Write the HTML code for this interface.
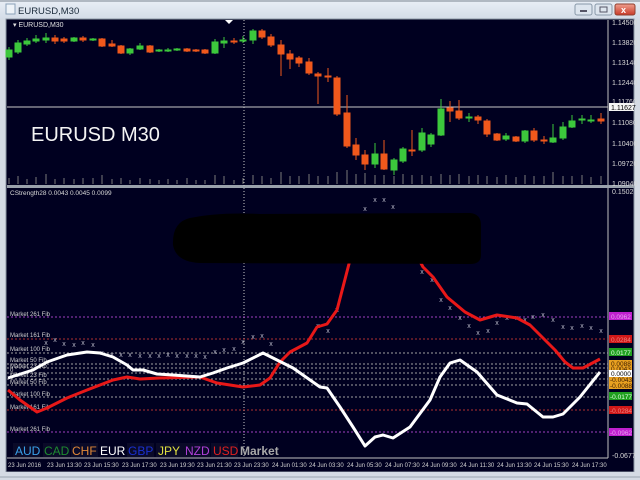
<!DOCTYPE html>
<html><head><meta charset="utf-8"><style>
html,body{margin:0;padding:0;width:640px;height:480px;overflow:hidden;background:#d6dde6;}
svg{display:block;font-family:"Liberation Sans",sans-serif;}
</style></head><body>
<svg width="640" height="480" viewBox="0 0 640 480" xmlns="http://www.w3.org/2000/svg">
<defs>
<linearGradient id="tb" x1="0" y1="0" x2="0" y2="1"><stop offset="0" stop-color="#e9eff6"/><stop offset="1" stop-color="#d3dce7"/></linearGradient>
<linearGradient id="cb" x1="0" y1="0" x2="0" y2="1"><stop offset="0" stop-color="#f0a090"/><stop offset="1" stop-color="#c83a28"/></linearGradient>
</defs>
<rect x="0" y="0" width="640" height="480" fill="#d4dbe4"/>
<rect x="0" y="0" width="640" height="19" fill="url(#tb)"/>
<rect x="0" y="0" width="640" height="2" fill="#b0b8c2"/>
<rect x="6" y="4" width="9" height="10" fill="#eef3f8" stroke="#8aa0b8" stroke-width="1"/>
<text x="18" y="14" font-size="9.5" fill="#1a2a3a">EURUSD,M30</text>
<rect x="575" y="4" width="17" height="11" rx="2" fill="#dde5ee" stroke="#8898a8"/>
<rect x="580" y="10" width="7" height="2" fill="#556"/>
<rect x="595" y="4" width="17" height="11" rx="2" fill="#dde5ee" stroke="#8898a8"/>
<rect x="600" y="7" width="7" height="5" fill="none" stroke="#556"/>
<rect x="615" y="4" width="20" height="11" rx="2" fill="url(#cb)" stroke="#904030"/>
<text x="621" y="13" font-size="9" fill="#fff" font-weight="bold">x</text>
<rect x="6" y="19" width="628" height="453" fill="#000020"/>
<rect x="6" y="19" width="628" height="453" fill="none" stroke="#8c97a4"/>
<line x1="608" y1="20" x2="608" y2="458" stroke="#c0c0c0"/>
<line x1="7" y1="458" x2="608" y2="458" stroke="#c0c0c0"/>
<rect x="7" y="185" width="627" height="3" fill="#9aa2ac"/>
<line x1="244" y1="20" x2="244" y2="458" stroke="#c8c8c8" stroke-dasharray="1,2"/>
<line x1="7" y1="107" x2="608" y2="107" stroke="#c8c8c8"/>
<path d="M225 20 l4 4 l4 -4z" fill="#fff"/>
<text x="13" y="27" font-size="7" fill="#e0e0e0">▾ EURUSD,M30</text>
<text x="31" y="141" font-size="20" fill="#f4f4f4">EURUSD M30</text>
<g font-size="7" fill="#d8d8d8">
<text x="612" y="25">1.14500</text>
<text x="612" y="45">1.13820</text>
<text x="612" y="65">1.13140</text>
<text x="612" y="85">1.12440</text>
<text x="612" y="104">1.11760</text>
<text x="612" y="125">1.11080</text>
<text x="612" y="146">1.10400</text>
<text x="612" y="166">1.09720</text>
<text x="612" y="186">1.09040</text>
<text x="612" y="194">0.1502</text>
<text x="612" y="458">-0.0677</text>
</g>
<rect x="609" y="103" width="25" height="8" fill="#f4f4f4"/>
<text x="611" y="110" font-size="7" fill="#000">1.11627</text>
<g stroke="#7a7a7a" stroke-width="1">
<path d="M9 184v-6M18 184v-8M27 184v-5M36 184v-7M46 184v-10M55 184v-5M64 184v-6M74 184v-5M83 184v-6M93 184v-6M102 184v-9M112 184v-5M121 184v-6M130 184v-4M140 184v-6M150 184v-5M159 184v-4M168 184v-5M177 184v-4M187 184v-6M196 184v-4M205 184v-4M215 184v-9M224 184v-8M234 184v-4M243 184v-6M253 184v-9M262 184v-8M271 184v-6M281 184v-12M290 184v-8M299 184v-8M309 184v-10M318 184v-8M328 184v-8M337 184v-12M347 184v-14M356 184v-10M365 184v-11M375 184v-9M384 184v-9M394 184v-8M403 184v-10M412 184v-9M422 184v-9M431 184v-8M441 184v-10M450 184v-9M459 184v-10M469 184v-8M478 184v-9M487 184v-8M497 184v-7M506 184v-9M516 184v-7M525 184v-9M534 184v-8M544 184v-8M553 184v-12M563 184v-8M572 184v-8M582 184v-9M591 184v-7M601 184v-8"/>
</g>
<g>
<g stroke="#3cc83c" fill="#3cc83c">
<path d="M9 47v13M18 40v14M27 38v8M36 35v8M46 33v10M74 37v5M93 38v3M130 48v7M140 43v7M159 49v3M168 48v4M177 48v3M215 39v15M224 37v11M243 36v7M253 29v15M375 143v25M394 158v17M403 147v16M422 128v24M431 133v14M441 99v37M469 113v9M506 133v8M525 130v13M553 124v19M563 122v18M572 115v13M582 115v9M591 115v8"/>
<rect x="6" y="50" width="6" height="7"/><rect x="15" y="43" width="6" height="9"/><rect x="24" y="41" width="6" height="3"/><rect x="33" y="39" width="6" height="2"/><rect x="43" y="38" width="6" height="2"/><rect x="71" y="38" width="6" height="3"/><rect x="90" y="39" width="6" height="1"/><rect x="127" y="49" width="6" height="4"/><rect x="137" y="46" width="6" height="3"/><rect x="156" y="50" width="6" height="1"/><rect x="165" y="50" width="6" height="1"/><rect x="174" y="49" width="6" height="1"/><rect x="212" y="42" width="6" height="11"/><rect x="221" y="41" width="6" height="2"/><rect x="240" y="40" width="6" height="1"/><rect x="250" y="31" width="6" height="9"/><rect x="372" y="154" width="6" height="10"/><rect x="391" y="160" width="6" height="10"/><rect x="400" y="149" width="6" height="12"/><rect x="419" y="133" width="6" height="17"/><rect x="428" y="135" width="6" height="9"/><rect x="438" y="109" width="6" height="26"/><rect x="466" y="117" width="6" height="1"/><rect x="503" y="136" width="6" height="3"/><rect x="522" y="131" width="6" height="10"/><rect x="550" y="138" width="6" height="4"/><rect x="560" y="127" width="6" height="11"/><rect x="569" y="121" width="6" height="6"/><rect x="579" y="119" width="6" height="1"/><rect x="588" y="120" width="6" height="1"/>
</g>
<g stroke="#f0581c" fill="#f0581c">
<path d="M55 35v9M64 37v6M83 36v6M102 38v9M112 40v7M121 45v9M150 45v8M187 48v4M196 49v3M205 49v5M234 38v6M262 29v10M271 34v13M281 40v36M290 50v19M299 56v11M309 58v17M318 72v32M328 68v14M337 76v40M347 95v53M356 138v22M365 150v20M384 140v30M412 130v26M450 101v21M459 100v20M478 115v9M487 119v18M497 133v8M516 136v6M534 128v14M544 136v8M601 113v11"/>
<rect x="52" y="38" width="6" height="3"/><rect x="61" y="39" width="6" height="2"/><rect x="80" y="38" width="6" height="2"/><rect x="99" y="39" width="6" height="7"/><rect x="109" y="44" width="6" height="2"/><rect x="118" y="46" width="6" height="7"/><rect x="147" y="46" width="6" height="6"/><rect x="184" y="49" width="6" height="2"/><rect x="193" y="50" width="6" height="1"/><rect x="202" y="50" width="6" height="3"/><rect x="231" y="41" width="6" height="1"/><rect x="259" y="31" width="6" height="6"/><rect x="268" y="37" width="6" height="8"/><rect x="278" y="45" width="6" height="9"/><rect x="287" y="54" width="6" height="5"/><rect x="296" y="58" width="6" height="5"/><rect x="306" y="62" width="6" height="11"/><rect x="315" y="74" width="6" height="2"/><rect x="325" y="76" width="6" height="1"/><rect x="334" y="78" width="6" height="36"/><rect x="344" y="113" width="6" height="33"/><rect x="353" y="145" width="6" height="10"/><rect x="362" y="155" width="6" height="9"/><rect x="381" y="154" width="6" height="15"/><rect x="409" y="150" width="6" height="1"/><rect x="447" y="108" width="6" height="3"/><rect x="456" y="111" width="6" height="7"/><rect x="475" y="117" width="6" height="3"/><rect x="484" y="121" width="6" height="13"/><rect x="494" y="134" width="6" height="6"/><rect x="513" y="137" width="6" height="4"/><rect x="531" y="131" width="6" height="9"/><rect x="541" y="140" width="6" height="1"/><rect x="598" y="119" width="6" height="2"/>
</g>
</g>
<text x="10" y="195" font-size="6.5" fill="#d8d8d8">CStrength28  0.0043 0.0045 0.0099</text>
<g stroke-dasharray="2,2" stroke-width="1">
<line x1="7" y1="317" x2="608" y2="317" stroke="#a040c0"/>
<line x1="7" y1="339" x2="608" y2="339" stroke="#b03030"/>
<line x1="7" y1="353" x2="608" y2="353" stroke="#a0a0a0"/>
<line x1="7" y1="364" x2="608" y2="364" stroke="#a0a0a0"/>
<line x1="7" y1="368" x2="608" y2="368" stroke="#a0a0a0"/>
<line x1="7" y1="373" x2="608" y2="373" stroke="#a0a0a0"/>
<line x1="7" y1="379" x2="608" y2="379" stroke="#a0a0a0"/>
<line x1="7" y1="385" x2="608" y2="385" stroke="#a0a0a0"/>
<line x1="7" y1="397" x2="608" y2="397" stroke="#a0a0a0"/>
<line x1="7" y1="410" x2="608" y2="410" stroke="#b03030"/>
<line x1="7" y1="432" x2="608" y2="432" stroke="#a040c0"/>
</g>
<g font-size="6" fill="#d0d0d0">
<text x="10" y="316">Market 261 Fib</text>
<text x="10" y="337">Market 161 Fib</text>
<text x="10" y="351">Market 100 Fib</text>
<text x="10" y="362">Market 50 Fib</text>
<text x="10" y="368">Market 23 Fib</text>
<text x="10" y="372">0</text>
<text x="10" y="377">Market 23 Fib</text>
<text x="10" y="384">Market 50 Fib</text>
<text x="10" y="396">Market 100 Fib</text>
<text x="10" y="409">Market 161 Fib</text>
<text x="10" y="431">Market 261 Fib</text>
</g>
<g font-size="6.5">
<rect x="609" y="312" width="23" height="8" fill="#c020d0"/><text x="611" y="319" fill="#e8a0f0">0.0962</text>
<rect x="609" y="335" width="23" height="8" fill="#d01818"/><text x="611" y="342" fill="#f08080">0.0284</text>
<rect x="609" y="348" width="23" height="8" fill="#20a020"/><text x="611" y="355" fill="#e0ffe0">0.0177</text>
<rect x="609" y="360" width="23" height="12" fill="#e8a020"/><text x="611" y="366" fill="#402000">0.0088</text><text x="611" y="371" fill="#402000">0.0043</text>
<rect x="609" y="370" width="23" height="7" fill="#fff"/><text x="611" y="376" fill="#000">0.0000</text>
<rect x="609" y="377" width="23" height="12" fill="#e8a020"/><text x="610" y="382" fill="#402000">-0.0043</text><text x="610" y="388" fill="#402000">-0.0088</text>
<rect x="609" y="392" width="23" height="8" fill="#20a020"/><text x="610" y="399" fill="#e0ffe0">-0.0177</text>
<rect x="609" y="406" width="23" height="8" fill="#d01818"/><text x="610" y="413" fill="#f08080">-0.0284</text>
<rect x="609" y="428" width="23" height="8" fill="#c020d0"/><text x="610" y="435" fill="#e8a0f0">-0.0962</text>
</g>
<g font-size="7" fill="#b8b8c8" text-anchor="middle">
<text x="46" y="345">x</text><text x="55" y="342">x</text><text x="64" y="346">x</text><text x="74" y="347">x</text><text x="83" y="345">x</text><text x="93" y="347">x</text><text x="102" y="355">x</text><text x="112" y="357">x</text><text x="121" y="357">x</text><text x="130" y="357">x</text><text x="140" y="358">x</text><text x="150" y="358">x</text><text x="159" y="358">x</text><text x="168" y="357">x</text><text x="177" y="358">x</text><text x="187" y="358">x</text><text x="196" y="358">x</text><text x="205" y="359">x</text><text x="215" y="354">x</text><text x="224" y="352">x</text><text x="234" y="351">x</text><text x="243" y="344">x</text><text x="253" y="339">x</text><text x="262" y="338">x</text><text x="271" y="346">x</text>
<text x="318" y="328">x</text><text x="328" y="333">x</text><text x="337" y="312">x</text>
<text x="365" y="211">x</text><text x="375" y="202">x</text><text x="384" y="202">x</text><text x="393" y="209">x</text>
<text x="422" y="274">x</text><text x="432" y="282">x</text><text x="441" y="302">x</text><text x="450" y="310">x</text><text x="460" y="320">x</text><text x="469" y="328">x</text><text x="478" y="335">x</text><text x="488" y="333">x</text><text x="497" y="325">x</text><text x="507" y="320">x</text><text x="517" y="320">x</text><text x="525" y="322">x</text><text x="533" y="319">x</text><text x="543" y="317">x</text><text x="553" y="322">x</text><text x="563" y="329">x</text><text x="572" y="330">x</text><text x="582" y="328">x</text><text x="591" y="330">x</text><text x="601" y="333">x</text>
</g>
<polyline fill="none" stroke="#e81818" stroke-width="3" stroke-linejoin="round" points="8,390 20,400 37,412 47,408 67,398 87,390 113,380 127,377 140,379 160,378 200,377 217,383 243,387 260,385 270,378 280,362 290,352 307,343 317,327 327,324 337,310 350,260 360,232 375,222 390,222 405,235 415,252 423,267 433,277 447,297 465,312 480,320 497,315 517,318 530,325 543,338 555,350 565,362 573,368 583,368 600,359"/>
<polyline fill="none" stroke="#ffffff" stroke-width="3" stroke-linejoin="round" points="8,378 33,370 47,362 67,355 87,352 100,353 113,357 127,365 133,370 143,370 157,374 173,375 200,377 213,373 227,368 243,363 263,353 277,360 293,368 320,387 327,388 340,407 353,427 365,446 375,437 383,435 393,438 410,427 430,400 440,377 450,363 460,360 477,372 497,395 517,403 527,404 543,417 553,417 563,414 580,397 600,372"/>
<path d="M190 218 Q220 212 260 214 L470 213 Q481 214 481 225 L481 255 Q481 264 470 264 L200 263 Q176 262 173 245 Q172 222 190 218 Z" fill="#000"/>
<g font-size="12">
<rect x="13" y="443" width="27" height="14" fill="#0a0a28"/><text x="15" y="455" fill="#3aa0e8">AUD</text>
<rect x="43" y="443" width="27" height="14" fill="#0a0a28"/><text x="44" y="455" fill="#1e8a30">CAD</text>
<rect x="71" y="443" width="27" height="14" fill="#0a0a28"/><text x="72" y="455" fill="#e08838">CHF</text>
<text x="100" y="455" fill="#ffffff">EUR</text>
<rect x="127" y="443" width="27" height="14" fill="#0a0a28"/><text x="128" y="455" fill="#1a30d0">GBP</text>
<rect x="156" y="443" width="27" height="14" fill="#0a0a28"/><text x="158" y="455" fill="#e0e040">JPY</text>
<rect x="183" y="443" width="27" height="14" fill="#0a0a28"/><text x="185" y="455" fill="#b040d8">NZD</text>
<rect x="211" y="443" width="27" height="14" fill="#0a0a28"/><text x="213" y="455" fill="#e02020">USD</text>
<text x="240" y="455" fill="#a8a8a8" font-weight="bold">Market</text>
</g>
<g font-size="6" fill="#d0d0d0">
<text x="8" y="467">23 Jun 2016</text><text x="47" y="467">23 Jun 13:30</text><text x="84" y="467">23 Jun 15:30</text><text x="122" y="467">23 Jun 17:30</text><text x="160" y="467">23 Jun 19:30</text><text x="197" y="467">23 Jun 21:30</text><text x="234" y="467">23 Jun 23:30</text><text x="272" y="467">24 Jun 01:30</text><text x="309" y="467">24 Jun 03:30</text><text x="347" y="467">24 Jun 05:30</text><text x="385" y="467">24 Jun 07:30</text><text x="422" y="467">24 Jun 09:30</text><text x="460" y="467">24 Jun 11:30</text><text x="497" y="467">24 Jun 13:30</text><text x="534" y="467">24 Jun 15:30</text><text x="572" y="467">24 Jun 17:30</text>
</g>
<rect x="0" y="472" width="640" height="8" fill="#d4dbe4"/>
<line x1="0" y1="477" x2="640" y2="477" stroke="#9aa4b0"/>
</svg>
</body></html>
